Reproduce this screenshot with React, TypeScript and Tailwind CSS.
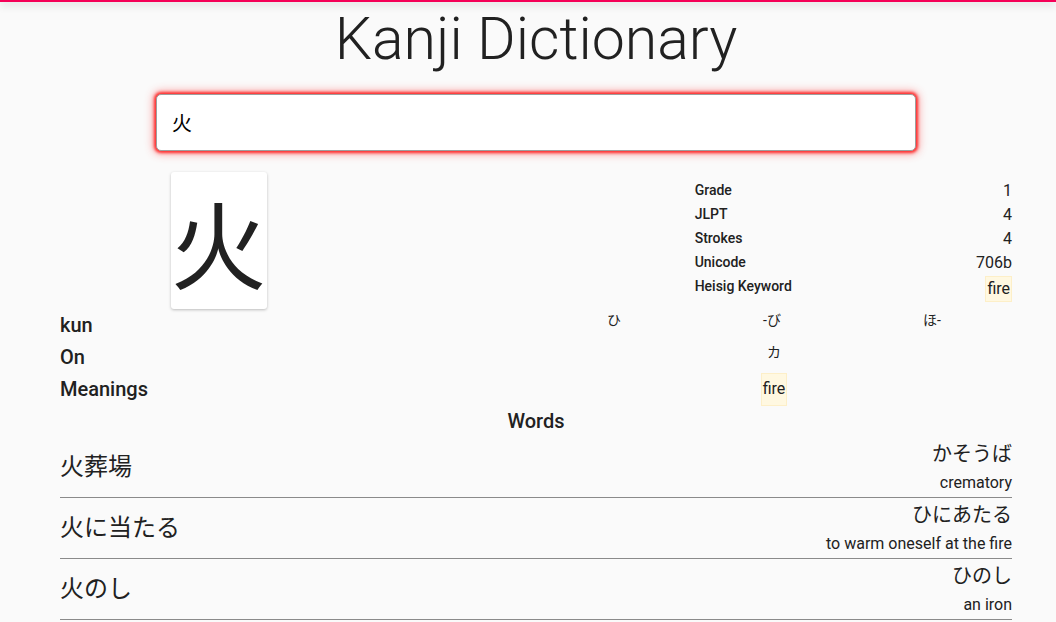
import React from 'react';

const info = [
  { label: 'Grade', value: '1' },
  { label: 'JLPT', value: '4' },
  { label: 'Strokes', value: '4' },
  { label: 'Unicode', value: '706b' },
  { label: 'Heisig Keyword', value: 'fire', highlight: true },
];

const words = [
  { word: '火葬場', reading: 'かそうば', meaning: 'crematory' },
  { word: '火に当たる', reading: 'ひにあたる', meaning: 'to warm oneself at the fire' },
  { word: '火のし', reading: 'ひのし', meaning: 'an iron' },
];

const font = { fontFamily: 'Roboto, "Noto Sans CJK JP", sans-serif' };

const App: React.FC = () => {
  return (
    <div className="min-h-[622px] bg-[#fafafa] text-[#212121] overflow-hidden" style={font}>
      <div className="h-[2px] bg-[#f50057] shadow-[0_2px_8px_rgba(0,0,0,0.3)]"></div>

      <div className="ml-[60px] w-[952px]">
        <h1 className="text-[59px] leading-none font-light text-center mt-[7px]">Kanji Dictionary</h1>

        <div className="flex justify-center mt-[26px]">
          <input
            autoFocus
            defaultValue="火"
            className="w-[760px] h-[57px] bg-white rounded-[5px] border border-[#9e9e9e] px-[15px] text-[20px] text-black outline-none shadow-[0_0_3px_2px_rgba(255,30,30,0.9),0_0_8px_3px_rgba(255,60,60,0.45)]"
          />
        </div>

        {/* kanji card + info table */}
        <div className="grid grid-cols-3 mt-[21px]">
          <div className="flex justify-center">
            <div className="w-[96px] h-[137px] bg-white rounded-[3px] shadow-[0_1px_3px_rgba(0,0,0,0.25)] flex items-center justify-center">
              <span className="text-[96px] leading-none" style={{ fontFamily: '"Noto Sans CJK JP", sans-serif' }}>火</span>
            </div>
          </div>
          <div></div>
          <div className="pt-[6px]">
            {info.map((r) => (
              <div key={r.label} className="flex items-center justify-between h-[24px]">
                <span className="text-[14px] font-medium">{r.label}</span>
                {r.highlight ? (
                  <span className="text-[16px] bg-[#fff8e1] border border-[#fdefc8] px-[1px] h-[26px] flex items-center mt-[5px]">{r.value}</span>
                ) : (
                  <span className="text-[16px] mt-[2px]">{r.value}</span>
                )}
              </div>
            ))}
          </div>
        </div>

        {/* readings */}
        <div className="grid grid-cols-2">
          <div className="h-[32px] flex items-center text-[20px] font-medium">kun</div>
          <div className="h-[32px] flex justify-around items-start text-[14px] pt-[1px]">
            <span>ひ</span>
            <span>-び</span>
            <span>ほ-</span>
          </div>
          <div className="h-[32px] flex items-center text-[20px] font-medium">On</div>
          <div className="h-[32px] flex justify-around items-start text-[14px] pt-[1px]">
            <span>カ</span>
          </div>
          <div className="h-[32px] flex items-center text-[20px] font-medium">Meanings</div>
          <div className="h-[32px] flex justify-around items-center">
            <span className="text-[16px] bg-[#fff8e1] border border-[#fdefc8] px-[1px] h-[33px] flex items-center">fire</span>
          </div>
        </div>

        <div className="h-[32px] flex items-center justify-center text-[20px] font-medium">Words</div>

        <div>
          {words.map((w) => (
            <div key={w.word} className="flex items-center justify-between border-b border-[#8a8a8a]">
              <span className="text-[24px]">{w.word}</span>
              <div className="flex flex-col items-end pt-[2px]">
                <span className="h-[30px] flex items-center text-[20px]">{w.reading}</span>
                <span className="h-[28px] flex items-center text-[16px]">{w.meaning}</span>
              </div>
            </div>
          ))}
        </div>
      </div>
    </div>
  );
};

export default App;
